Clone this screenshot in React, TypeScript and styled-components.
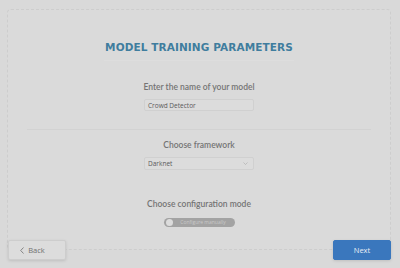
import React from 'react';
import styled, { createGlobalStyle } from 'styled-components';

const Global = createGlobalStyle`
    html, body {
        margin: 0;
        padding: 0;
        background: #d9d9d9;
    }
    #root {
        width: 400px;
        height: 268px;
        overflow: hidden;
    }
`;

const Page = styled.div`
    width: 400px;
    height: 268px;
    padding: 9px 9px 0 7px;
    box-sizing: border-box;
    font-family: Lato, 'Open Sans', sans-serif;
`;

const Card = styled.div`
    height: 241px;
    box-sizing: border-box;
    border: 1px dashed #cdcdcd;
    border-radius: 4px;
    background: #dadada;
    padding-top: 30px;
    display: flex;
    flex-direction: column;
    align-items: center;
`;

const Title = styled.h1`
    margin: 0;
    font-family: 'DejaVu Sans', sans-serif;
    font-weight: bold;
    font-size: 10.5px;
    line-height: 14px;
    color: #3f7d9e;
    letter-spacing: 0.1px;
`;

const Rule = styled.div<{ $w: number; $top: number; $color: string }>`
    width: ${(p) => p.$w}px;
    height: 1px;
    margin-top: ${(p) => p.$top}px;
    background: ${(p) => p.$color};
`;

const Label = styled.div<{ $top: number }>`
    margin-top: ${(p) => p.$top}px;
    font-size: 8.5px;
    line-height: 12px;
    font-weight: 600;
    color: #747474;
`;

const Field = styled.div<{ $h: number }>`
    margin-top: 6px;
    width: 110px;
    height: ${(p) => p.$h}px;
    box-sizing: border-box;
    border: 1px solid #d0d0d0;
    border-radius: 2px;
    background: #dcdcdc;
    display: flex;
    align-items: center;
    justify-content: space-between;
    padding: 0 5px 0 3px;
    font-family: 'Open Sans', sans-serif;
    font-size: 6.5px;
    color: #5a5a5a;
`;

const Chevron = styled.svg`
    width: 5px;
    height: 3px;
`;

const Toggle = styled.div`
    margin-top: 8px;
    width: 71px;
    height: 9px;
    border-radius: 5px;
    background: #a3a3a3;
    display: flex;
    align-items: center;
    padding: 0 1px 0 2px;
    box-sizing: border-box;
`;

const Knob = styled.span`
    width: 7px;
    height: 7px;
    border-radius: 50%;
    background: #dcdcdc;
    flex: none;
`;

const ToggleText = styled.span`
    flex: 1;
    text-align: center;
    font-family: 'Open Sans', sans-serif;
    font-size: 5px;
    color: #c9c9c9;
    line-height: 9px;
`;

const Footer = styled.div`
    margin-top: -10px;
    margin-left: 1px;
    display: flex;
    justify-content: space-between;
`;

const Button = styled.button<{ $primary?: boolean }>`
    width: 58px;
    height: 20px;
    border-radius: 2px;
    border: 1px solid ${(p) => (p.$primary ? '#3a77bd' : '#cdcdcd')};
    background: ${(p) => (p.$primary ? '#3a77bd' : '#dcdcdc')};
    color: ${(p) => (p.$primary ? '#e8eef6' : '#707070')};
    box-shadow: 0 1px 3px rgba(0, 0, 0, 0.12);
    font-family: 'Open Sans', sans-serif;
    font-size: 7.5px;
    display: flex;
    align-items: center;
    justify-content: center;
    gap: 4px;
    padding: 0;
    box-sizing: border-box;
`;

const BackInner = styled.span`
    display: flex;
    align-items: center;
    gap: 4px;
    margin-left: -9px;
`;

export default function App() {
    return (
        <>
            <Global />
            <Page>
                <Card>
                    <Title>MODEL TRAINING PARAMETERS</Title>
                    <Rule $w={190} $top={6} $color="#dddddd" />
                    <Label $top={20}>Enter the name of your model</Label>
                    <Field $h={12}>Crowd Detector</Field>
                    <Rule $w={344} $top={18} $color="#d2d2d2" />
                    <Label $top={9}>Choose framework</Label>
                    <Field $h={13}>
                        Darknet
                        <Chevron viewBox="0 0 5 3">
                            <path d="M0.5 0.5 L2.5 2.5 L4.5 0.5" fill="none" stroke="#aaa" strokeWidth="0.6" />
                        </Chevron>
                    </Field>
                    <Label $top={28}>Choose configuration mode</Label>
                    <Toggle>
                        <Knob />
                        <ToggleText>Configure manually</ToggleText>
                    </Toggle>
                </Card>
                <Footer>
                    <Button>
                        <BackInner>
                            <svg width="4" height="7" viewBox="0 0 4 7">
                                <path d="M3.5 0.5 L0.7 3.5 L3.5 6.5" fill="none" stroke="#707070" strokeWidth="0.8" />
                            </svg>
                            Back
                        </BackInner>
                    </Button>
                    <Button $primary>Next</Button>
                </Footer>
            </Page>
        </>
    );
}
